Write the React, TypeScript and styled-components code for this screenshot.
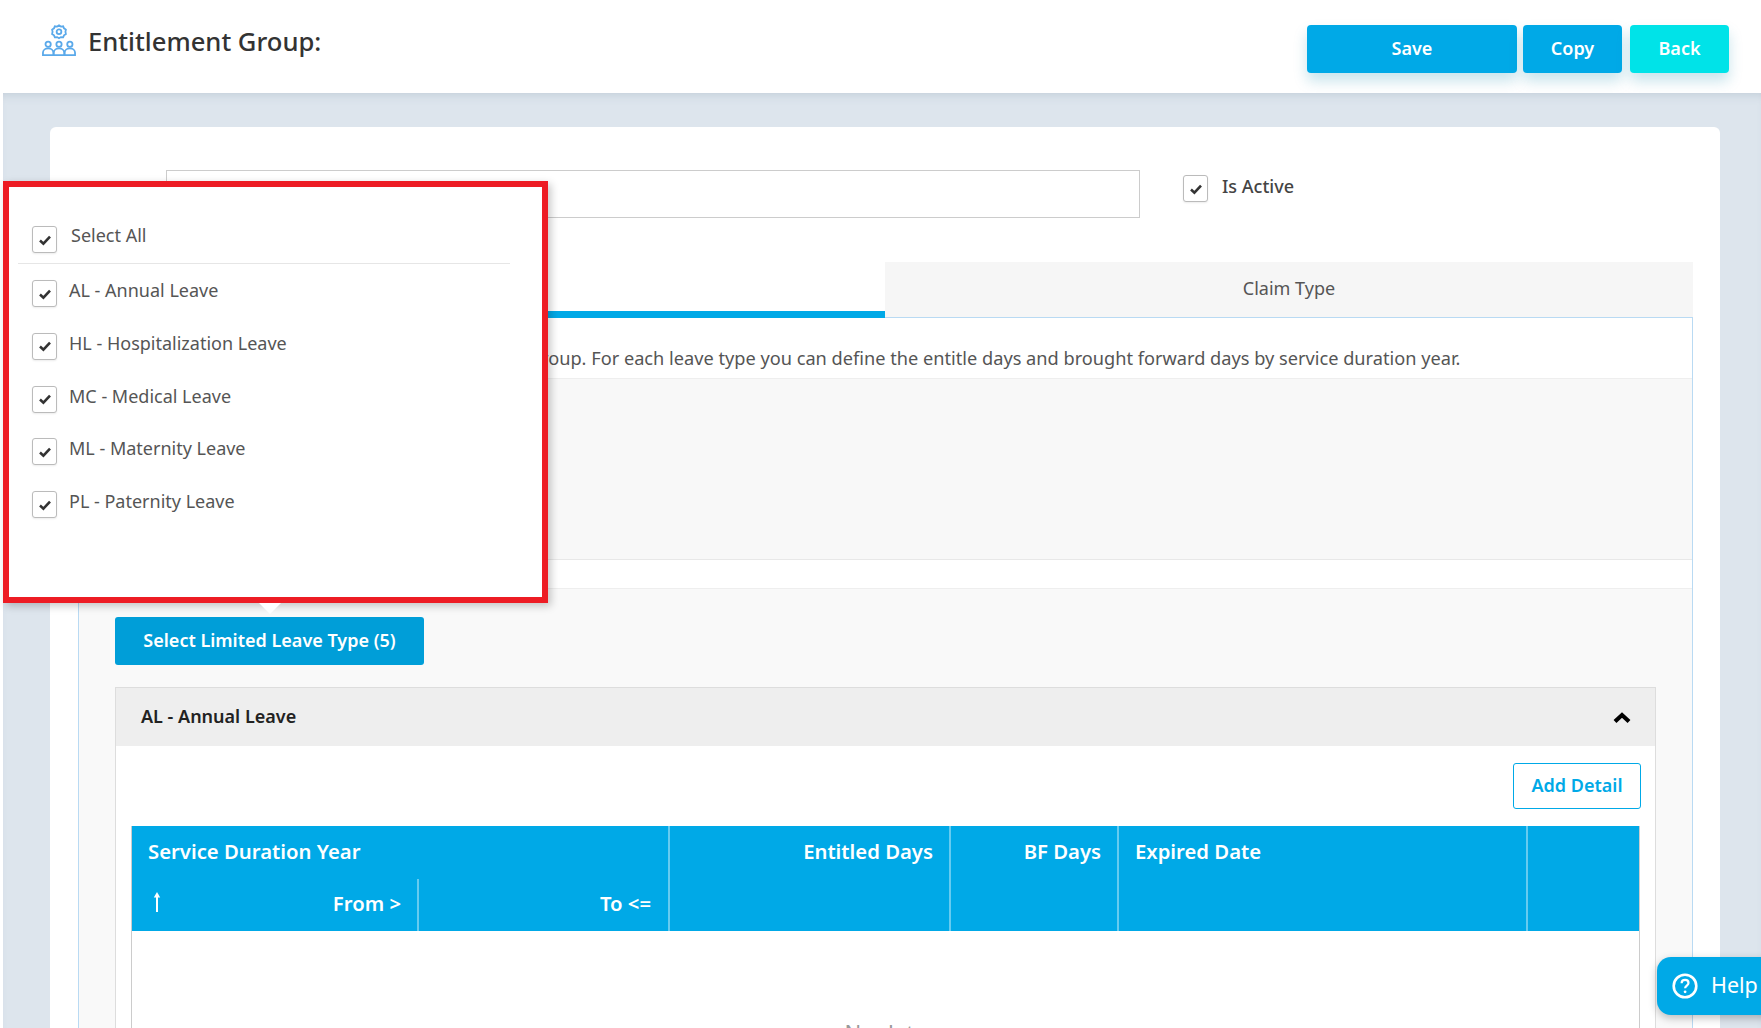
import React from "react";
import styled, { createGlobalStyle } from "styled-components";

const BLUE = "#00a9e7";

const GlobalStyle = createGlobalStyle`
  html, body {
    margin: 0;
    height: 100%;
    overflow: hidden;
    background: #fff;
    font-family: "Noto Sans", "Open Sans", sans-serif;
  }
  * { box-sizing: border-box; }
`;

const Page = styled.div`
  position: relative;
  width: 1761px;
  height: 1028px;
  overflow: hidden;
  padding-left: 3px;
  display: flex;
  flex-direction: column;
`;

const Header = styled.header`
  height: 93px;
  flex: none;
  display: flex;
  justify-content: space-between;
  padding: 25px 32px 0 39px;
  background: #fff;
`;

const TitleWrap = styled.div`
  display: flex;
  align-items: flex-start;
  gap: 12px;
`;

const Title = styled.h1`
  margin: 0;
  font-size: 25.6px;
  line-height: 33px;
  font-weight: 500;
  color: #333;
`;

const Actions = styled.div`
  display: flex;
  gap: 6px;
`;

const ActionButton = styled.button<{ $w: number; $back?: boolean }>`
  width: ${(p) => p.$w}px;
  height: 48px;
  margin-left: ${(p) => (p.$back ? "2px" : "0")};
  border: 0;
  border-radius: 4px;
  padding: 0 0 2px;
  background: ${(p) => (p.$back ? "#00e3e8" : BLUE)};
  box-shadow: 0 8px 14px rgba(0, 130, 170, 0.22);
  color: #fff;
  font-family: inherit;
  font-size: 18px;
  font-weight: 600;
`;

const Main = styled.main`
  flex: 1;
  min-height: 0;
  background: #dde5ed;
  box-shadow: inset 0 8px 10px -6px rgba(120, 140, 160, 0.25);
  padding: 34px 41px 0 47px;
`;

const Card = styled.section`
  height: 100%;
  background: #fff;
  border-radius: 6px 6px 0 0;
  padding-top: 43px;
`;

const FormRow = styled.div`
  display: flex;
  align-items: flex-start;
  padding-left: 116px;
`;

const TextInput = styled.div`
  width: 974px;
  height: 48px;
  border: 1px solid #ccc;
  background: #fff;
`;

const ActiveField = styled.label`
  display: flex;
  align-items: flex-start;
  gap: 14px;
  margin: 5px 0 0 43px;
  font-size: 18px;
  line-height: 23px;
  font-weight: 500;
  color: #444;
`;

const Box = styled.span`
  width: 25px;
  height: 27px;
  flex: none;
  display: flex;
  align-items: center;
  justify-content: center;
  border: 1.5px solid #bbb;
  border-radius: 3px;
  background: #fff;
  box-shadow: 0 1px 2px rgba(0, 0, 0, 0.08);
`;

const Tabs = styled.div`
  display: flex;
  margin: 44px 27px 0 28px;
  height: 56px;
`;

const Tab = styled.div<{ $active?: boolean }>`
  display: flex;
  align-items: center;
  justify-content: center;
  font-size: 18px;
  color: #555;
  ${(p) =>
    p.$active
      ? `width: 807px; background: #fff; border-bottom: 7px solid ${BLUE};`
      : `flex: 1; background: #f6f6f6; border-bottom: 1px solid #b9daf3; padding-bottom: 3px;`}
`;

const Panel = styled.div`
  margin: 0 27px 0 28px;
  height: 710px;
  border: 1px solid #b9daf3;
  border-top: 0;
`;

const Description = styled.p`
  margin: 0;
  height: 60px;
  padding: 27px 0 0 126px;
  font-size: 18.2px;
  line-height: 26px;
  color: #555;
  white-space: nowrap;
`;

const InfoBlock = styled.div`
  height: 182px;
  background: #f8f8f8;
  border-top: 1px solid #eee;
  border-bottom: 1px solid #e8e8e8;
`;

const LimitedBlock = styled.div`
  margin-top: 28px;
  height: 440px;
  background: #f9f9f9;
  border-top: 1px solid #eee;
  padding: 28px 36px 0 36px;
`;

const SelectButton = styled.button`
  display: block;
  width: 309px;
  height: 48px;
  border: 0;
  border-radius: 3px;
  padding: 0 0 2px;
  background: #009ed8;
  color: #fff;
  font-family: inherit;
  font-size: 18px;
  font-weight: 600;
`;

const Accordion = styled.div`
  margin-top: 22px;
  height: 400px;
  background: #fff;
  border: 1px solid #ddd;
`;

const AccordionHead = styled.div`
  height: 58px;
  background: #eee;
  display: flex;
  align-items: center;
  justify-content: space-between;
  padding: 0 24px 2px 25px;
  font-size: 18px;
  font-weight: 600;
  color: #222;

  svg {
    margin-top: 4px;
  }
`;

const AccordionBody = styled.div`
  padding: 17px 15px 0;
`;

const ToolRow = styled.div`
  display: flex;
  justify-content: flex-end;
  margin-right: -1px;
`;

const AddButton = styled.button`
  width: 128px;
  height: 46px;
  border: 1.5px solid ${BLUE};
  border-radius: 3px;
  padding: 0 0 2px;
  background: #fff;
  color: ${BLUE};
  font-family: inherit;
  font-size: 18px;
  font-weight: 600;
`;

const Table = styled.div`
  margin-top: 17px;
  border-left: 1px solid #ccc;
  border-right: 1px solid #ccc;
  height: 300px;
  background: #fff;
`;

const TableHead = styled.div`
  display: grid;
  grid-template-columns: 287px 251px 281px 168px 409px 1fr;
  grid-template-rows: 53px 52px;
  background: ${BLUE};
  color: #fff;
  font-size: 20.3px;
  font-weight: 600;
`;

const HeadCell = styled.div<{ $span?: number; $rows?: number; $right?: boolean; $sub?: boolean; $noLine?: boolean }>`
  grid-column: span ${(p) => p.$span || 1};
  grid-row: span ${(p) => p.$rows || 1};
  display: flex;
  justify-content: ${(p) => (p.$right ? "flex-end" : "flex-start")};
  align-items: ${(p) => (p.$sub ? "center" : "flex-start")};
  padding: ${(p) => (p.$sub ? "0 17px 4px 16px" : "11px 16px 0")};
  border-right: ${(p) => (p.$noLine ? "0" : "2px solid rgba(255, 255, 255, 0.4)")};
  line-height: 29px;
`;

const FromCell = styled(HeadCell)`
  justify-content: space-between;
  padding-left: 20px;
  padding-right: 16px;

  svg {
    margin-bottom: 2px;
  }
`;

const EmptyText = styled.div`
  padding-top: 86px;
  text-align: center;
  font-size: 22px;
  color: #999;
`;

const Popup = styled.div`
  position: absolute;
  left: 3px;
  top: 181px;
  width: 545px;
  height: 422px;
  border: 6px solid #ed1c24;
  background: #fff;
  box-shadow: 3px 3px 8px rgba(0, 0, 0, 0.22);
  padding: 39px 32px 0 9px;
  z-index: 2;

  &::after {
    content: "";
    position: absolute;
    left: 250px;
    bottom: -17px;
    border-left: 11px solid transparent;
    border-right: 11px solid transparent;
    border-top: 11px solid #fff;
  }
`;

const SelectAllRow = styled.label`
  display: flex;
  align-items: flex-start;
  gap: 14px;
  height: 38px;
  padding-left: 14px;
  border-bottom: 1.5px solid #e6e6e6;
  font-size: 18px;
  line-height: 18px;
  color: #555;
`;

const OptionList = styled.div`
  padding: 16px 0 0 14px;
  display: flex;
  flex-direction: column;
  gap: 25.8px;
`;

const OptionRow = styled.label`
  display: flex;
  align-items: flex-start;
  gap: 12px;
  height: 27px;
  font-size: 18px;
  line-height: 20px;
  color: #555;
`;

const HelpTab = styled.button`
  position: absolute;
  left: 1657px;
  top: 957px;
  width: 120px;
  height: 58px;
  border: 0;
  border-radius: 14px 0 0 14px;
  background: ${BLUE};
  box-shadow: 0 3px 8px rgba(0, 0, 0, 0.25);
  color: #fff;
  font-family: inherit;
  font-size: 21.5px;
  display: flex;
  align-items: center;
  gap: 13px;
  padding: 0 0 0 15px;
  z-index: 3;
`;

const HelpLabel = styled.span`
  margin-bottom: 3px;
`;

const Check = () => (
  <svg width="14" height="12" viewBox="0 0 14 12" fill="none">
    <path d="M2 6.5 5.4 9.6 12 2.6" stroke="#333" strokeWidth="2.6" />
  </svg>
);

const GroupIcon = () => (
  <svg width="34" height="33" viewBox="0 0 36 34" fill="none" stroke="#5aa9ea" strokeWidth="1.9" style={{ marginTop: -1 }}>
    <path d="M18 1l2 1.2 2.4-.3.9 2.2 2 1.4-.5 2.3.5 2.3-2 1.4-.9 2.2-2.4-.3-2 1.2-2-1.2-2.4.3-.9-2.2-2-1.4.5-2.3-.5-2.3 2-1.4.9-2.2 2.4.3z" />
    <circle cx="18" cy="7.8" r="2.5" />
    <circle cx="6.5" cy="21" r="2.8" />
    <circle cx="18" cy="21" r="2.8" />
    <circle cx="29.5" cy="21" r="2.8" />
    <path d="M1 32.5v-2.5c0-2.8 2.4-4.6 5.5-4.6s5.5 1.8 5.5 4.6v2.5zM12.5 32.5v-2.5c0-2.8 2.4-4.6 5.5-4.6s5.5 1.8 5.5 4.6v2.5zM24 32.5v-2.5c0-2.8 2.4-4.6 5.5-4.6s5.5 1.8 5.5 4.6v2.5z" />
  </svg>
);

const ChevronUp = () => (
  <svg width="18" height="12" viewBox="0 0 18 12" fill="none">
    <path d="M2 9.5 9 3l7 6.5" stroke="#000" strokeWidth="4.2" />
  </svg>
);

const UpArrow = () => (
  <svg width="10" height="22" viewBox="0 0 10 22" fill="none">
    <path d="M5 21V3" stroke="#fff" strokeWidth="2" />
    <path d="M1.8 6.5 5 1l3.2 5.5z" fill="#fff" />
  </svg>
);

const HelpIcon = () => (
  <svg width="26" height="26" viewBox="0 0 26 26" fill="none">
    <circle cx="13" cy="13" r="11.3" stroke="#fff" strokeWidth="2.6" />
    <path d="M9.6 10.2c0-2 1.5-3.3 3.5-3.3s3.4 1.2 3.4 3c0 2.6-3.4 2.7-3.4 5.4" stroke="#fff" strokeWidth="2.2" />
    <circle cx="13.1" cy="18.8" r="1.4" fill="#fff" />
  </svg>
);

const leaveTypes = [
  "AL - Annual Leave",
  "HL - Hospitalization Leave",
  "MC - Medical Leave",
  "ML - Maternity Leave",
  "PL - Paternity Leave",
];

export default function App() {
  return (
    <Page>
      <GlobalStyle />
      <Header>
        <TitleWrap>
          <GroupIcon />
          <Title>Entitlement Group:</Title>
        </TitleWrap>
        <Actions>
          <ActionButton $w={210}>Save</ActionButton>
          <ActionButton $w={99}>Copy</ActionButton>
          <ActionButton $w={99} $back>
            Back
          </ActionButton>
        </Actions>
      </Header>
      <Main>
        <Card>
          <FormRow>
            <TextInput />
            <ActiveField>
              <Box>
                <Check />
              </Box>
              Is Active
            </ActiveField>
          </FormRow>
          <Tabs>
            <Tab $active>Leave Type</Tab>
            <Tab>Claim Type</Tab>
          </Tabs>
          <Panel>
            <Description>
              Select leave types for this entitlement group. For each leave type you can define the entitle days and
              brought forward days by service duration year.
            </Description>
            <InfoBlock />
            <LimitedBlock>
              <SelectButton>Select Limited Leave Type (5)</SelectButton>
              <Accordion>
                <AccordionHead>
                  AL - Annual Leave
                  <ChevronUp />
                </AccordionHead>
                <AccordionBody>
                  <ToolRow>
                    <AddButton>Add Detail</AddButton>
                  </ToolRow>
                  <Table>
                    <TableHead>
                      <HeadCell $span={2}>Service Duration Year</HeadCell>
                      <HeadCell $rows={2} $right>
                        Entitled Days
                      </HeadCell>
                      <HeadCell $rows={2} $right>
                        BF Days
                      </HeadCell>
                      <HeadCell $rows={2}>Expired Date</HeadCell>
                      <HeadCell $rows={2} $noLine />
                      <FromCell $sub $right>
                        <UpArrow />
                        From &gt;
                      </FromCell>
                      <HeadCell $sub $right>
                        To &lt;=
                      </HeadCell>
                    </TableHead>
                    <EmptyText>No data</EmptyText>
                  </Table>
                </AccordionBody>
              </Accordion>
            </LimitedBlock>
          </Panel>
        </Card>
      </Main>
      <Popup>
        <SelectAllRow>
          <Box>
            <Check />
          </Box>
          Select All
        </SelectAllRow>
        <OptionList>
          {leaveTypes.map((name) => (
            <OptionRow key={name}>
              <Box>
                <Check />
              </Box>
              {name}
            </OptionRow>
          ))}
        </OptionList>
      </Popup>
      <HelpTab>
        <HelpIcon />
        <HelpLabel>Help</HelpLabel>
      </HelpTab>
    </Page>
  );
}
